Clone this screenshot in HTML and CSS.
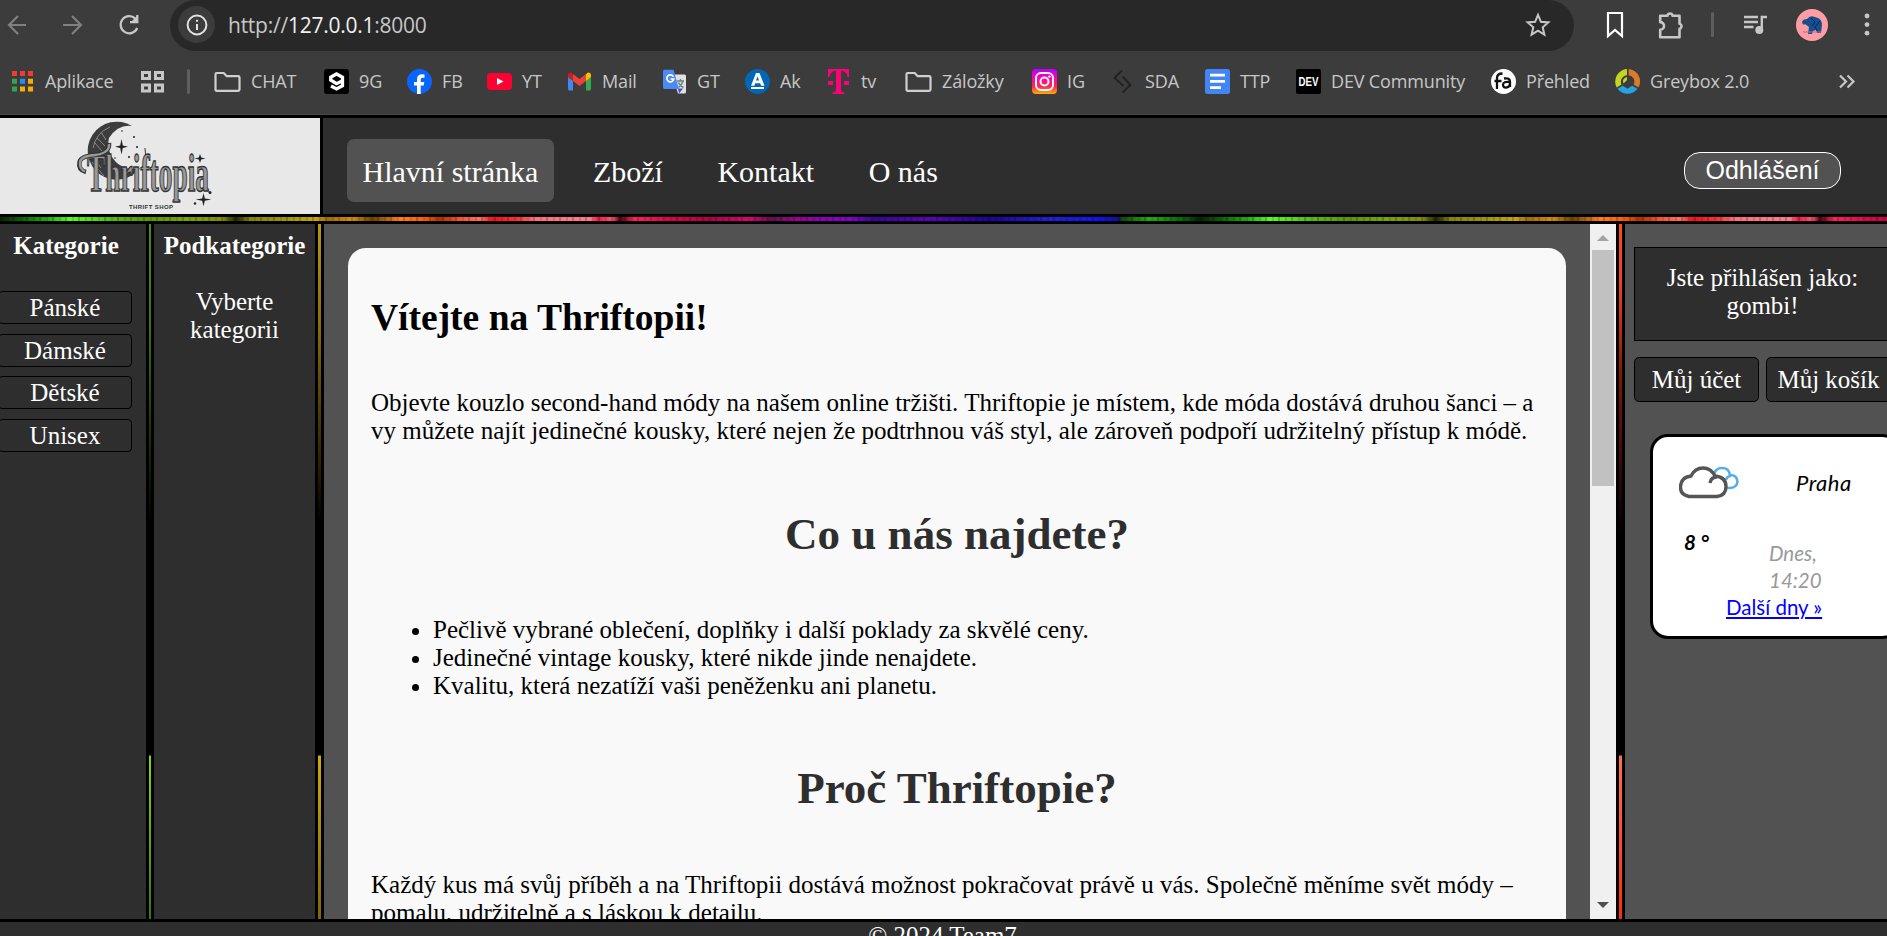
FILE: index.html
```html
<!DOCTYPE html>
<html lang="cs">
<head>
<meta charset="utf-8">
<title>Thriftopia</title>
<link rel="stylesheet" href="styles.css">
</head>
<body>
<div class="browser">
  <div class="toolbar">
    <div class="nav-icons">
      <svg width="22" height="22" viewBox="0 0 22 22" class="dim"><path d="M20 11H3M12 2L3 11l9 9"/></svg>
      <svg width="22" height="22" viewBox="0 0 22 22" class="dim"><path d="M1 11h17M10 2l9 9-9 9"/></svg>
      <svg width="22" height="22" viewBox="0 0 22 22" class="lit"><path d="M17.500 4.800A8.600 8.600 0 1 0 19.200 14M19.300 1v7.200H12"/><path d="M19 2v6h-6z" fill="#c7c7c7" stroke="none"/></svg>
    </div>
    <div class="omnibox">
      <span class="info"><svg width="22" height="22" viewBox="0 0 22 22"><circle cx="11" cy="11" r="9.400" fill="none" stroke="#e3e3e3" stroke-width="2"/><path d="M11 10v6M11 5.800v2" stroke="#e3e3e3" stroke-width="2"/></svg></span>
      <span class="url">http://<b>127.0.0.1</b>:8000</span>
      <svg class="star" width="26" height="26" viewBox="0 0 26 26"><path d="M13 2.800l2.900 7 7.400.6-5.600 4.900 1.700 7.300L13 18.700l-6.400 3.900 1.700-7.300-5.600-4.900 7.400-.6z" fill="none" stroke="#c7c7c7" stroke-width="2"/></svg>
    </div>
    <svg class="tool t1" width="18" height="28" viewBox="0 0 18 28"><path d="M2 2h14v23l-7-6-7 6z" fill="none" stroke="#fff" stroke-width="2.200"/></svg>
    <svg class="tool t2" width="28" height="28" viewBox="0 0 28 28"><path d="M3.200 4.800h7.300V4a2.800 2.800 0 0 1 5 0v.8h7v8H23a2.800 2.800 0 0 1 0 5h-.5v8.400H3.200v-7.500a3.800 3.800 0 0 0 0-7.600z" fill="none" stroke="#c7c7c7" stroke-width="2.600" stroke-linejoin="round"/></svg>
    <i class="tool-sep"></i>
    <svg class="tool t3" width="26" height="22" viewBox="0 0 26 22"><path d="M1 3h14M1 8h14M1 13h9.500M18.800 16V3h5.200" fill="none" stroke="#c7c7c7" stroke-width="2.400"/><circle cx="16.300" cy="16" r="4" fill="#c7c7c7"/></svg>
    <svg class="tool t4" width="32" height="32" viewBox="0 0 32 32"><circle cx="16" cy="16" r="16" fill="#ff9da4"/><path d="M6 13q1-3 5-3 3-4 8-2 7 1 7 8l-1 8h-4l-1-3-3 1-1 3h-4l1-7-4-3q-2 2-3-2z" fill="#164f8f"/><path d="M15 9l4 4-3 4M24 12l-5 6 4 6" stroke="#0c2747" fill="none"/><path d="M7 23h18" stroke="#b76e86"/></svg>
    <svg class="tool t5" width="6" height="24" viewBox="0 0 6 24" fill="#c7c7c7"><circle cx="3" cy="3" r="2.400"/><circle cx="3" cy="11.600" r="2.400"/><circle cx="3" cy="20.200" r="2.400"/></svg>
  </div>
  <div class="bookmarks">
    <div class="bm apps"><svg width="25" height="25" viewBox="0 0 25 25"><path fill="#f43b32" d="M2 2h5v5H2zM10 2h5v5h-5zM18 2h5v5h-5z"/><path fill="#34a350" d="M2 9.800h5v5H2zM2 17.600h5v5H2z"/><path fill="#268cff" d="M10 9.800h5v5h-5z"/><path fill="#fbab05" d="M18 9.800h5v5h-5zM10 17.600h5v5h-5zM18 17.600h5v5h-5z"/></svg><span>Aplikace</span></div>
    <div class="bm"><svg width="25" height="25" viewBox="0 0 25 25" fill="none" stroke="#c7c7c7" stroke-width="3"><path d="M2.500 3.500h7v6h-7zM15.500 3.500h7v6h-7zM2.500 16h7v6h-7zM15.500 16h7v6h-7z"/></svg></div>
    <div class="bm"><i class="bm-sep"></i></div>
    <div class="bm folder"><svg width="27" height="25" viewBox="0 0 27 25"><path d="M1.500 5.200q0-1.200 1.200-1.200h7l3 3.200h11.500q1.300 0 1.300 1.300v12q0 1.300-1.300 1.300H2.700q-1.200 0-1.200-1.300z" fill="none" stroke="#d0d0d0" stroke-width="2.200"/></svg><span>CHAT</span></div>
    <div class="bm"><svg width="25" height="25" viewBox="0 0 25 25"><rect width="25" height="25" rx="3" fill="#000"/><path d="M19 11.500l-6.500 3.200L6.700 11V8.200L12.500 5 18.500 8.200v8.600L12.500 20l-5.500-3" fill="none" stroke="#fff" stroke-width="3.300"/></svg><span>9G</span></div>
    <div class="bm"><svg width="25" height="25" viewBox="0 0 25 25"><circle cx="12.500" cy="12.500" r="12.500" fill="#0866ff"/><path d="M10 25v-8.500H7V13h3v-2.500q0-5 4.500-5.200 1.500 0 3 .3v3.200h-2q-1.800 0-1.800 2V13h3.600l-.6 3.500h-3V25z" fill="#fff"/></svg><span>FB</span></div>
    <div class="bm"><svg width="25" height="25" viewBox="0 0 25 25"><rect y="4" width="25" height="17" rx="4" fill="#ff0033"/><path d="M10 9l6.500 3.500L10 16z" fill="#fff"/></svg><span>YT</span></div>
    <div class="bm"><svg width="25" height="25" viewBox="0 0 25 25"><path fill="#4285f4" d="M1 8v12q0 1.500 1.500 1.500H6V11.500z"/><path fill="#34a853" d="M24 8v12q0 1.500-1.500 1.500H19V11.500z"/><path fill="#ea4335" d="M6 5l6.500 5L19 5v7l-6.500 5L6 12z"/><path fill="#c5221f" d="M1 6q0-3 3-2.500L6 5v7L1 8z"/><path fill="#fbbc04" d="M24 6q0-3-3-2.500L19 5v7l5-4z"/></svg><span>Mail</span></div>
    <div class="bm"><svg width="25" height="25" viewBox="0 0 25 25"><path d="M10 5.500h12.500q1.500 0 1.500 1.500v16q0 1.500-1.500 1.500H16z" fill="#e0e0e0"/><path d="M16 19.500l1 5 4-5z" fill="#3155c4"/><path d="M2 .8h9.500L17 20H2.500Q1 20 1 18V2.500Q1 .8 2 .8z" fill="#4c8bf5"/><path d="M11.400 7.600A3.500 3.500 0 1 0 11.800 10H8.500" fill="none" stroke="#fff" stroke-width="1.700"/><path d="M15 12h7M18.500 10v2m2.500 0q-1 4-4.500 6.500M16.500 13.500q1 3 5 5" stroke="#6b7f86" fill="none" stroke-width="1.400"/></svg><span>GT</span></div>
    <div class="bm"><svg width="25" height="25" viewBox="0 0 25 25"><circle cx="12.500" cy="12.500" r="12.500" fill="#0068b5"/><path d="M6 16.800L11 4h3.500l5 12.800h-3.500l-.8-2.600h-5l-.8 2.600zm5-5.200h3l-1.500-4.300zM6 18h13v2H6z" fill="#fff" fill-rule="evenodd"/></svg><span>Ak</span></div>
    <div class="bm"><svg width="25" height="25" viewBox="0 0 25 25" fill="#ff0078"><path d="M2 0h21v8h-1.500Q21 2 15 1.700V20q0 3.500 3.500 3.500V25h-12v-1.500Q10 23.500 10 20V1.700Q4 2 3.500 8H2zM2 12h5v4H2zM18 12h5v4h-5z"/></svg><span>tv</span></div>
    <div class="bm folder"><svg width="27" height="25" viewBox="0 0 27 25"><path d="M1.500 5.200q0-1.200 1.200-1.200h7l3 3.200h11.500q1.300 0 1.300 1.300v12q0 1.300-1.300 1.300H2.700q-1.200 0-1.200-1.300z" fill="none" stroke="#d0d0d0" stroke-width="2.200"/></svg><span>Záložky</span></div>
    <div class="bm"><svg width="25" height="25" viewBox="0 0 25 25"><defs><linearGradient id="ig" x1="0" y1="0" x2="0" y2="1"><stop offset="0" stop-color="#b400ff"/><stop offset=".35" stop-color="#ff00b8"/><stop offset=".7" stop-color="#ff2850"/><stop offset="1" stop-color="#ffb000"/></linearGradient></defs><rect width="25" height="25" rx="4" fill="url(#ig)"/><rect x="4" y="4" width="17" height="17" rx="5" fill="none" stroke="#fff" stroke-width="2"/><circle cx="12.500" cy="12.500" r="4" fill="none" stroke="#fff" stroke-width="2"/><circle cx="17.400" cy="7.600" r="1.200" fill="#fff"/></svg><span>IG</span></div>
    <div class="bm"><svg width="25" height="25" viewBox="0 0 25 25"><path d="M12 1.500L4.500 9l9 8M12.500 7.500l8 8.500-8 7.500" fill="none" stroke="#222" stroke-width="1.900"/></svg><span>SDA</span></div>
    <div class="bm"><svg width="25" height="25" viewBox="0 0 25 25"><rect width="25" height="25" rx="2.500" fill="#4285f4"/><path d="M5 6.200h15M5 12.400h15M5 18.600h11" stroke="#fff" stroke-width="2.700"/></svg><span>TTP</span></div>
    <div class="bm"><svg width="25" height="25" viewBox="0 0 25 25"><rect width="25" height="25" rx="2" fill="#000"/><text x="2.500" y="16.800" textLength="20" lengthAdjust="spacingAndGlyphs" class="dev">DEV</text></svg><span>DEV Community</span></div>
    <div class="bm"><svg width="25" height="25" viewBox="0 0 25 25"><circle cx="12.500" cy="12.500" r="12.500" fill="#fff"/><path d="M6 20V9q0-4.500 5.500-4.500M3.500 12h7M13 9.500q6-1 6 3V18M19 13q-7-1-7 2.800 0 3 3.500 2.700 3.500-.5 3.500-4" fill="none" stroke="#111" stroke-width="2.300"/></svg><span>Přehled</span></div>
    <div class="bm"><svg width="25" height="25" viewBox="0 0 25 25"><path d="M12 0v6.200a6.500 6.500 0 0 0-5.500 9.300L1.700 18.500A12.500 12.500 0 0 1 12 0z" fill="#c6d420"/><path d="M13.700 0v6.200a6.500 6.500 0 0 1 5 9.300l4.800 3A12.500 12.500 0 0 0 13.700 0z" fill="#d97b2b"/><path d="M2.500 19.800l5.300-3 4.700 3 4.700-3 5.300 3a12.500 12.500 0 0 1-20 0z" fill="#26a3e0"/><path d="M12 8v3l-3.500 3.500q-2-5 3.500-6.500z" fill="#c6d420"/></svg><span>Greybox 2.0</span></div>
    <div class="bm"><svg width="25" height="25" viewBox="0 0 25 25"><path d="M6 6.500l6 6-6 6M13.500 6.500l6 6-6 6" fill="none" stroke="#c7c7c7" stroke-width="2.200"/></svg></div>
  </div>
</div>
<header class="header">
  <div class="logo">
    <svg width="320" height="96" viewBox="0 0 320 96">
      <path d="M132 8A29 29 0 1 0 140 50 25 25 0 0 1 109 20Q118 6 132 8z" fill="#3c3c3c"/>
      <path d="M93 30q3-15 17-21M91 36l10 14M94 24l9 10M101 14l5 8M92 44l12 14M97 20l8 8" stroke="#888" fill="none"/>
      <path d="M145 30q2 12-4 22" stroke="#333" fill="none"/>
      <g fill="#222"><path d="M121.500 21l1.300 6.500 5.200 1.200-5.200 1.200-1.300 6.500-1.300-6.500-5.200-1.200 5.200-1.200zM200 36l1.200 3.500 4.300 1-4.300 1-1.200 3.500-1.200-3.500-4.300-1 4.300-1zM203.500 75l1.300 5.400 6.500 1.200-6.500 1.200-1.300 5.400-1.300-5.400-6.500-1.200 6.500-1.200z"/><circle cx="210" cy="74.500" r="1.500"/><circle cx="195" cy="85.500" r="1.200"/><circle cx="134" cy="19" r="1"/><circle cx="137" cy="29" r="1"/><circle cx="129" cy="39" r="1"/><circle cx="122" cy="13" r=".8"/><circle cx="115" cy="40" r=".8"/></g>
      <text x="87" y="73" textLength="122" lengthAdjust="spacingAndGlyphs" class="logo-word">Thriftopia</text>
      <path d="M109 25q1 10-14 12-14 1-15.500 7Q78 52 86 54" fill="none" stroke="#333" stroke-width="4.500"/>
      <path d="M109 26q1 9-14 11-14 1-15 7-1 7 5 9.500" fill="none" stroke="#999" stroke-width="2.400"/>
      <text x="129" y="90.500" textLength="44" class="logo-sub">THRIFT SHOP</text>
    </svg>
  </div>
  <nav class="menu">
    <a class="active">Hlavní stránka</a><a>Zboží</a><a>Kontakt</a><a>O nás</a>
  </nav>
  <button class="logout">Odhlášení</button>
</header>
<div class="rainbow"></div>
<div class="columns">
  <section class="cats">
    <h3>Kategorie</h3>
    <a>Pánské</a><a>Dámské</a><a>Dětské</a><a>Unisex</a>
  </section>
  <i class="divider green"></i>
  <section class="subcats">
    <h3>Podkategorie</h3>
    <p>Vyberte kategorii</p>
  </section>
  <i class="divider gold"></i>
  <main class="main">
    <article class="card">
      <h1>Vítejte na Thriftopii!</h1>
      <p>Objevte kouzlo second-hand módy na našem online tržišti. Thriftopie je místem, kde móda dostává druhou šanci – a<br>vy můžete najít jedinečné kousky, které nejen že podtrhnou váš styl, ale zároveň podpoří udržitelný přístup k módě.</p>
      <h2>Co u nás najdete?</h2>
      <ul>
        <li>Pečlivě vybrané oblečení, doplňky i další poklady za skvělé ceny.</li>
        <li>Jedinečné vintage kousky, které nikde jinde nenajdete.</li>
        <li>Kvalitu, která nezatíží vaši peněženku ani planetu.</li>
      </ul>
      <h2>Proč Thriftopie?</h2>
      <p>Každý kus má svůj příběh a na Thriftopii dostává možnost pokračovat právě u vás. Společně měníme svět módy –<br>pomalu, udržitelně a s láskou k detailu.</p>
    </article>
  </main>
  <div class="scrollbar">
    <svg width="26" height="26" viewBox="0 0 26 26"><path d="M7 17l6-6 6 6z" fill="#a3a3a3"/></svg>
    <div class="thumb"></div>
    <svg class="down" width="26" height="26" viewBox="0 0 26 26"><path d="M7 9h12l-6 6z" fill="#505050"/></svg>
  </div>
  <i class="divider red"></i>
  <aside class="side">
    <div class="user">Jste přihlášen jako:<br>gombi!</div>
    <div class="buttons"><a>Můj účet</a><a>Můj košík</a></div>
    <div class="weather">
      <div class="w-top">
        <svg width="60" height="36" viewBox="0 0 60 36"><path d="M35 9q2-6 8-6 7 0 8 7 7 0 7.500 6.500Q58 23 50 23h-2M47 15q1-4 5-4" fill="none" stroke="#55aee5" stroke-width="2.600"/><path d="M10 31.500Q1 30 1.500 21.500 2 12 12 11 16 3 24 3q8 0 12 8 11 1 11 10.500 0 9-9 10zM31 18q1-6 7-6" fill="#fff" stroke="#555" stroke-width="3.400"/></svg>
        <em class="city">Praha</em>
      </div>
      <div class="w-mid"><b>8 °</b><em>Dnes,<br>14:20</em></div>
      <a class="more">Další dny »</a>
    </div>
  </aside>
</div>
<footer class="footer">© 2024 Team7</footer>
</body>
</html>
```
FILE: styles.css
```css
* { box-sizing: border-box; }
body {
  margin: 0; width: 1887px; height: 936px; overflow: hidden;
  display: flex; flex-direction: column;
  background: #000; color: #fff;
  font: 25px/28px "Liberation Serif", serif;
}
h1, h2, h3, p, ul { margin: 0; }
svg { display: block; flex: none; }
i { flex: none; }

.browser {
  flex: none; height: 115px; background: #3c3c3c; border-bottom: 1px solid #484848;
  font-family: "Open Sans", "Noto Sans", sans-serif; color: #c7c7c7;
}
.toolbar { display: flex; align-items: center; height: 51px; padding-bottom: 2px; }
.nav-icons { width: 170px; padding-left: 6px; display: flex; gap: 34px; flex: none; }
.nav-icons svg { fill: none; stroke-width: 2.2; }
.dim { stroke: #808080; }
.lit { stroke: #c7c7c7; }
.omnibox {
  width: 1404px; height: 51px; flex: none; background: #282828; border-radius: 26px;
  margin-bottom: -2px; padding: 0 0 2px 8px; display: flex; align-items: center;
}
.info { width: 37px; height: 37px; border-radius: 50%; background: #3c3c3c; display: flex; align-items: center; justify-content: center; }
.url { margin-left: 13px; font-size: 21px; letter-spacing: -.25px; }
.url b { font-weight: 400; color: #f0f0f0; }
.star { margin-left: auto; margin-right: 23px; }
.t1 { margin-left: 32px; }
.t2 { margin-left: 33px; }
.tool-sep { width: 3px; height: 25px; border-radius: 2px; background: #5e5e5e; margin-left: 26px; }
.t3 { margin-left: 29px; }
.t4 { margin-left: 27px; }
.t5 { margin-left: 36px; }

.bookmarks {
  display: grid; height: 60px; padding-left: 10px; align-items: center; font-size: 18px;
  grid-template-columns: 130px 46px 28px 110px 83px 80px 80px 95px 83px 81px 79px 127px 78px 95px 91px 195px 124px 219px 40px;
}
.bm { display: flex; align-items: center; gap: 10px; height: 30px; white-space: nowrap; }
.bm span { letter-spacing: -.15px; line-height: 28px; }
.folder { gap: 10px; margin-left: 1px; }
.folder svg { margin-left: -1px; }
.bm-sep { width: 3px; height: 25px; border-radius: 2px; background: #5e5e5e; margin-left: 1px; }
.dev { font: bold 12px "Liberation Sans", sans-serif; fill: #fff; }

.header { flex: none; display: flex; height: 99px; border-top: 3px solid #000; background: #2e2e2e; align-items: center; }
.logo { width: 323px; height: 96px; background: #e8e8e8; border-right: 3px solid #000; flex: none; }
.logo-word { font: bold 52px "Liberation Serif", serif; fill: #999; stroke: #333; stroke-width: 1.5px; }
.logo-sub { font: bold 6px "Liberation Sans", sans-serif; fill: #333; }
.menu { display: flex; gap: 23.6px; margin: 9px 0 0 24px; font-size: 30px; }
.menu a { height: 63px; line-height: 66px; padding: 0 15.5px; border-radius: 7px; white-space: nowrap; }
.menu .active { background: #525252; }
.logout {
  margin: 9px 46px 0 auto; width: 157px; height: 37px; border-radius: 16px; border: 1px solid #fff;
  background: #525252; color: #fff; font: 25px/33px "Liberation Sans", sans-serif; padding: 0;
}

.rainbow {
  flex: none; height: 10px; border: solid #000; border-width: 3px 0;
  background-image:
    repeating-linear-gradient(90deg, rgba(0,0,0,.2) 0 2px, transparent 2px 7px, rgba(0,0,0,.12) 7px 9px, transparent 9px 13px),
    linear-gradient(90deg, #002800 0, #087000 25px, #20b010 48px, #55ff10 70px, #50c010 110px, #589800 150px, #77a500 185px, #889000 222px, #242400 236px, #858500 250px, #a49900 290px, #c6a800 315px, #a66b00 328px, #d98e00 352px, #704000 372px, #ff8010 400px, #ff5a00 425px, #b03000 440px, #ff5030 460px, #ff7060 480px, #ff1010 492px, #ff3030 518px, #ff7080 535px, #ff7a88 590px, #ff1050 598px, #ff5078 612px, #500010 620px, #ff2060 634px, #e00050 670px, #b0004c 710px, #e00078 750px, #601050 772px, #a00090 795px, #9000b8 822px, #8600d0 850px, #4000a0 875px, #6000c0 930px, #2000a0 990px, #2020e0 1050px, #1010ff 1100px, #101090 1119px, #0a5000 1122px, #20b010 1150px, #086000 1185px, #002800 1200px);
  background-size: 1200px 4px;
}

.columns { flex: none; height: 695px; display: flex; background: #525252; }
.cats, .subcats { background: #2e2e2e; flex: none; text-align: center; }
.cats { width: 146px; }
.cats h3 { width: 132px; padding-top: 8px; margin-bottom: 31px; font-size: 25px; }
.cats a { display: block; width: 134px; height: 33px; margin: 0 0 9.5px -2px; border: 1px solid #000; border-radius: 4px; line-height: 32px; }
.subcats { width: 161px; }
.subcats h3 { padding-top: 8px; font-size: 25px; }
.subcats p { margin: 28px 25px 0; }
.divider { width: 8px; border: solid #000; border-width: 0 3px; }
.gold, .red { width: 9px; }
.green { background: linear-gradient(#4d8f08 0, #3a7808 100px, #000 300px, #000 531px, #86d90c 532px, #3d7800 695px); }
.gold { background: linear-gradient(#b89810 0, #8a7000 100px, #000 300px, #000 531px, #cfab04 532px, #806800 695px); }
.red { background: linear-gradient(#ff4a20 0, #f04020 60px, #801808 150px, #000 310px, #000 531px, #ff7050 532px, #ff2a08 695px); }

.main { width: 1266px; padding: 24px 24px 0; overflow: hidden; flex: none; }
.card { background: #f9f9f9; color: #000; border-radius: 18px 18px 0 0; height: 900px; padding: 48px 0 0 23px; white-space: nowrap; }
.card h1 { font-size: 37.5px; line-height: 44px; margin-bottom: 49px; }
.card h2 { font-size: 45px; line-height: 52px; color: #2e2e2e; text-align: center; margin: 63px 23px 56px 0; }
.card ul { padding-left: 62px; margin-bottom: 62px; }
.card ul + h2 { margin-top: 62px; }
.card h2 + p { margin-top: 57px; }

.scrollbar { width: 26px; background: #f0f0f0; display: flex; flex-direction: column; flex: none; }
.thumb { width: 22px; height: 236px; margin-left: 2px; background: #c1c1c1; }
.down { margin-top: auto; }

.side { flex: none; width: 262px; padding: 23px 0 0 9px; overflow: hidden; white-space: nowrap; }
.user { width: 257px; height: 94px; border: 1px solid #000; background: #2e2e2e; text-align: center; padding-top: 16px; }
.buttons { display: flex; gap: 7px; margin-top: 16px; }
.buttons a { width: 125px; height: 45px; border: 1px solid #000; border-radius: 5px; background: #2e2e2e; text-align: center; line-height: 44px; flex: none; }
.weather {
  width: 250px; height: 205px; margin: 32px 0 0 16px; border: 3px solid #000; border-radius: 18px;
  background: #fff; color: #000; font: 20.5px/27px Lato, sans-serif; padding: 27px 0 0 25px;
}
.w-top { display: flex; align-items: center; height: 38px; }
.w-top svg { margin-left: 1px; }
.city { margin: -2px 0 0 57px; font-size: 22px; letter-spacing: .5px; }
.w-mid { display: flex; margin-top: 21px; }
.w-mid b { width: 91px; padding: 6px 0 0 6px; font-style: italic; }
.w-mid em { color: #999; padding-top: 17px; }
.more { display: block; margin-left: 48px; color: #00f; text-decoration: underline; }

.footer { flex: none; height: 17px; border-top: 3px solid #000; background: #2e2e2e; text-align: center; line-height: 28px; padding-right: 2px; overflow: hidden; }
```
